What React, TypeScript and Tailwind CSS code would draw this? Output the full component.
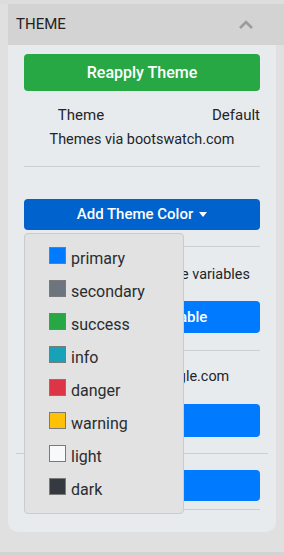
import React from "react";

const colors: { name: string; c: string }[] = [
  { name: "primary", c: "bg-[#007bff]" },
  { name: "secondary", c: "bg-[#6c757d]" },
  { name: "success", c: "bg-[#28a745]" },
  { name: "info", c: "bg-[#17a2b8]" },
  { name: "danger", c: "bg-[#dc3545]" },
  { name: "warning", c: "bg-[#ffc107]" },
  { name: "light", c: "bg-[#f8f9fa]" },
  { name: "dark", c: "bg-[#343a40]" },
];

export default function App() {
  return (
    <div
      className="relative w-[284px] h-[556px] overflow-hidden bg-[#dfe0df] text-[#212529]"
      style={{ fontFamily: "Roboto, 'Liberation Sans', sans-serif" }}
    >
      <div className="h-[4px] bg-[#dcdddc]" />
      <div className="ml-[8px]">
        <div className="h-[41px] bg-[#d3d3d3] flex items-center justify-between pl-[8px] pr-[30px]">
          <span className="text-[15px] text-[#222]">THEME</span>
          <svg width="16" height="10" viewBox="0 0 16 10">
            <polyline points="2,8 8,2 14,8" fill="none" stroke="#9b9b9b" strokeWidth="2.6" />
          </svg>
        </div>
        <div className="mr-[8px] bg-[#e8ebee] rounded-b-[10px] h-[487px] px-[16px] pt-[9px]">
          <button className="w-full h-[37px] rounded-[4px] bg-[#28a745] text-white text-[16px] font-medium">
            Reapply Theme
          </button>
          <div className="grid grid-cols-2 text-[15px] mt-[15px] leading-[18px]">
            <span className="text-center pr-[4px]">Theme</span>
            <span className="text-right">Default</span>
          </div>
          <div className="text-center text-[14.4px] mt-[7px] leading-[18px]">Themes via bootswatch.com</div>
          <div className="border-t border-[#cdd0d3] mt-[17px]" />
          <button className="mt-[32px] w-full h-[31px] rounded-[4px] bg-[#0062cc] text-white text-[15px] font-medium flex items-center justify-center">
            Add Theme Color
            <span className="ml-[6px] inline-block w-0 h-0 border-l-[4px] border-r-[4px] border-t-[5px] border-l-transparent border-r-transparent border-t-white" />
          </button>
          <div className="border-t border-[#cdd0d3] mt-[16px]" />
          <div className="text-center text-[14.4px] mt-[19px] leading-[18px] whitespace-nowrap">Customize all the theme variables</div>
          <button className="mt-[17px] w-full h-[32px] rounded-[4px] bg-[#007bff] text-white text-[15px] font-medium">
            Set Theme Variable
          </button>
          <div className="border-t border-[#cdd0d3] mt-[17px]" />
          <div className="text-center text-[14.4px] mt-[17px] leading-[18px]">Fonts via fonts.google.com</div>
          <button className="mt-[18px] w-full h-[33px] rounded-[4px] bg-[#007bff] text-white text-[15px] font-medium">
            Select Fonts
          </button>
          <div className="border-t border-[#cdd0d3] mt-[16px] -mx-[8px]" />
          <button className="mt-[16px] w-full h-[31px] rounded-[4px] bg-[#007bff] text-white text-[15px] font-medium">
            Save Theme
          </button>
          <div className="border-t border-[#cdd0d3] mt-[8px]" />
        </div>
      </div>
      <div className="absolute left-0 right-0 top-[552px] h-[4px] bg-[#d2d3d2]" />
      <div className="absolute left-[24px] top-[233px] w-[160px] h-[281px] bg-[#e1e2e1] border border-[#c9cbcc] rounded-[4px] py-[8px]">
        {colors.map((k) => (
          <div key={k.name} className="h-[33px] pl-[24px] text-[16px] leading-[33px] text-[#2a2d30]">
            <span className={`inline-block w-[17px] h-[17px] border-[1.5px] border-[#7a7a7a] align-baseline mr-[5px] ${k.c}`} />
            {k.name}
          </div>
        ))}
      </div>
    </div>
  );
}
